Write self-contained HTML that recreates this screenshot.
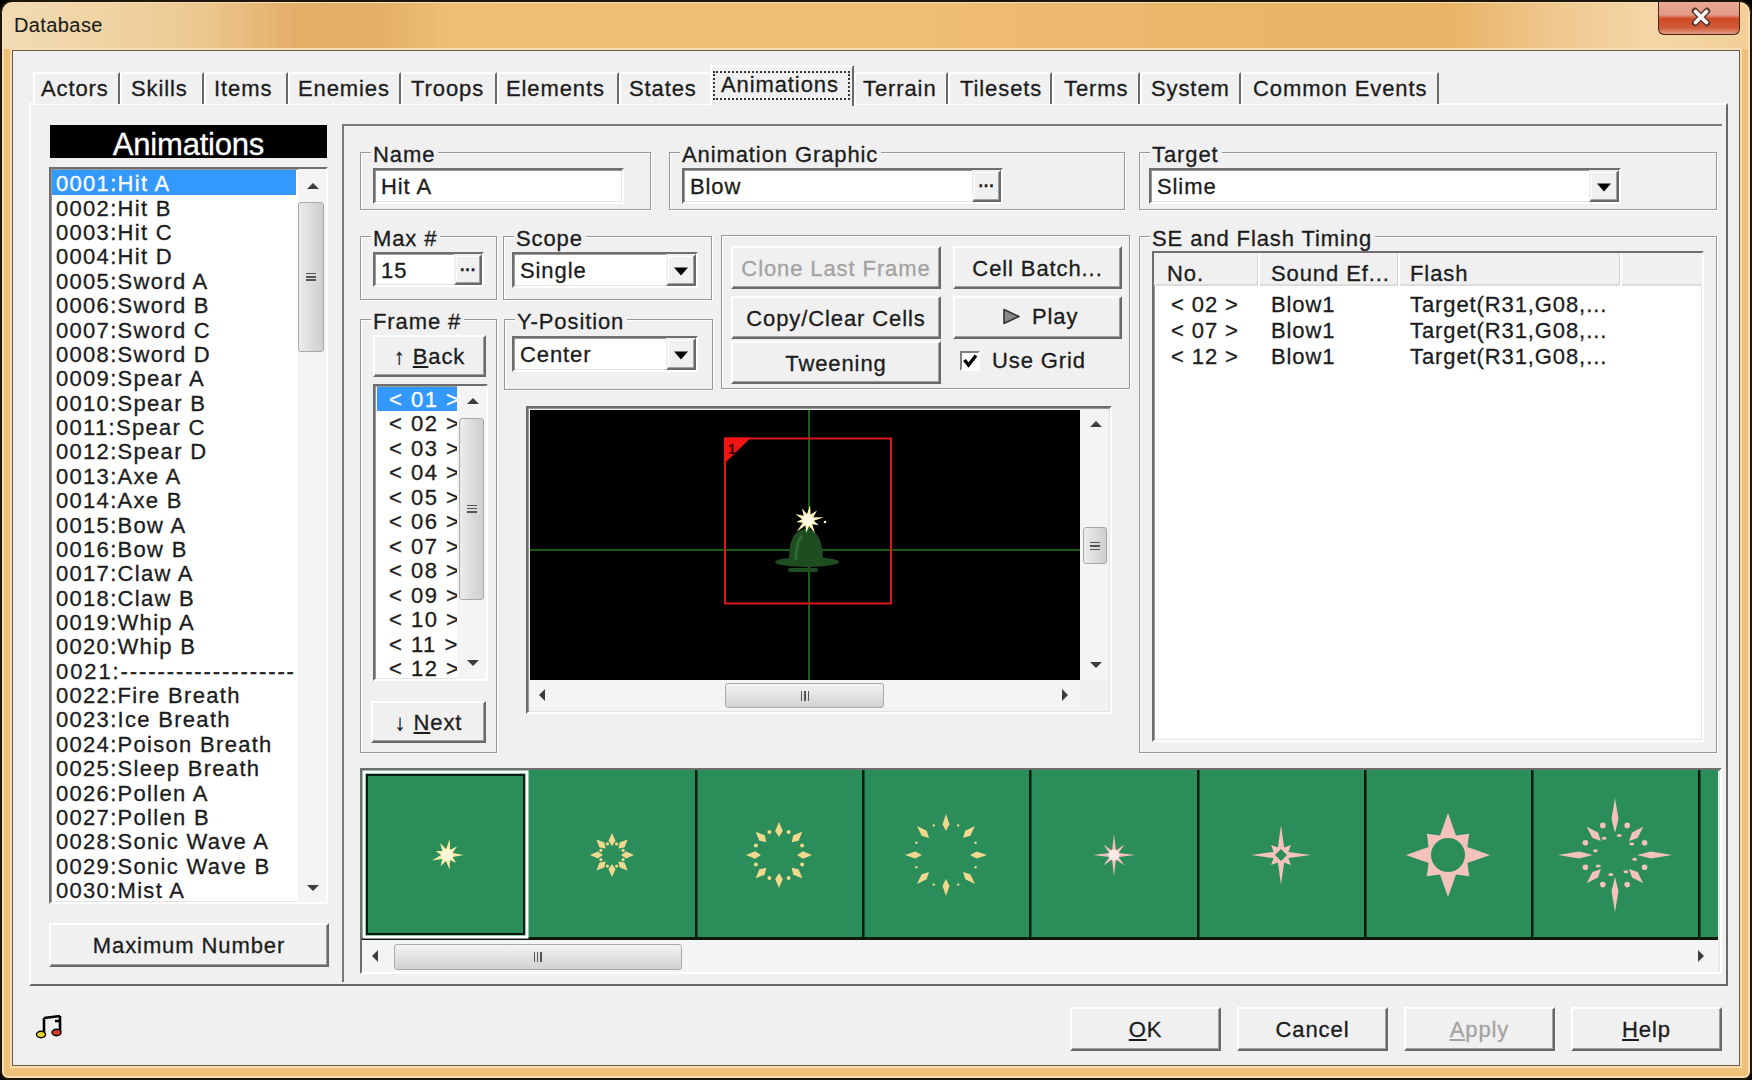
<!DOCTYPE html>
<html><head><meta charset="utf-8">
<style>
*{margin:0;padding:0;box-sizing:border-box}
html,body{width:1752px;height:1080px;overflow:hidden;background:#000}
body{position:relative;font-family:"Liberation Sans",sans-serif;font-size:22px;color:#1c1c1c;letter-spacing:0.9px;-webkit-text-stroke-width:0.3px}
.a{position:absolute}
.t{position:absolute;white-space:nowrap;line-height:1}
#frame{left:0;top:0;width:1752px;height:1080px;border-radius:12px 12px 8px 8px;background:#eec07a;border:2px solid #1e160c;box-shadow:inset 0 0 0 2px #f7ddb4}
#title{left:4px;top:3px;width:1744px;height:46px;border-radius:10px 10px 0 0;background:linear-gradient(90deg,#f1dab3 0px,#f0d4a4 96px,#ecc890 196px,#e3ad66 296px,#e4b068 376px,#efbf74 446px,#f0be73 896px,#e9b66a 1196px,#e9b467 1446px,#f0c890 1556px,#f4d6a6 1646px,#f2cf98 1744px)}
#client{left:12px;top:50px;width:1728px;height:1016px;background:#f0f0f0;border:1px solid #6b5a40;box-shadow:0 0 0 2px #f7ddb4}
.btn{position:absolute;background:#f0f0f0;border-top:2px solid #fff;border-left:2px solid #fff;border-right:2px solid #696969;border-bottom:2px solid #696969;box-shadow:inset -1px -1px 0 #a0a0a0;display:flex;align-items:center;justify-content:center;white-space:nowrap;line-height:1;padding-top:2px}
.grp{position:absolute;border:1px solid #989898;box-shadow:1px 1px 0 #fff, inset 1px 1px 0 #fff}
.lbl{position:absolute;background:#f0f0f0;padding:0 3px 0 2px;line-height:1;white-space:nowrap;top:-9.5px;left:10px}
.sunk{position:absolute;background:#fff;border-top:2px solid #6e6e6e;border-left:2px solid #6e6e6e;border-right:2px solid #fff;border-bottom:2px solid #fff;box-shadow:inset 1px 1px 0 #9a9a9a, inset -1px -1px 0 #e3e3e3}
.tab{position:absolute;top:72px;height:32px;border-top:2px solid #fff;border-left:2px solid #fff;border-right:2px solid #696969;background:#f0f0f0}
.row{position:absolute;left:1px;width:244px;height:24.4px;line-height:24.4px;white-space:nowrap;letter-spacing:1.3px;padding-left:4px}
.row.sel,.frow.sel{background:#3399ff;color:#fff}
.frow{position:absolute;left:2px;width:82px;height:24.4px;line-height:24.4px;white-space:nowrap;letter-spacing:1.5px;padding-left:12px}
.sb{position:absolute;background:#f4f4f4}
.thumb{position:absolute;border:1px solid #a9a9a9;border-radius:3px;background:linear-gradient(90deg,#ececec,#dcdcdc 50%,#cfcfcf)}
.thumbh{position:absolute;border:1px solid #a9a9a9;border-radius:3px;background:linear-gradient(180deg,#f3f3f3,#e2e2e2 50%,#d2d2d2)}
.arr{position:absolute;width:0;height:0}
.arr.up{border-left:6px solid transparent;border-right:6px solid transparent;border-bottom:6px solid #3c3c3c}
.arr.dn{border-left:6px solid transparent;border-right:6px solid transparent;border-top:6px solid #3c3c3c}
.arr.lf{border-top:6px solid transparent;border-bottom:6px solid transparent;border-right:6px solid #3c3c3c}
.arr.rt{border-top:6px solid transparent;border-bottom:6px solid transparent;border-left:6px solid #3c3c3c}
.grip{position:absolute;left:50%;top:50%;transform:translate(-50%,-50%)}
.grip.v{width:10px;height:9px;background:repeating-linear-gradient(180deg,#555 0 1.5px,transparent 1.5px 3.5px)}
.grip.h{width:9px;height:10px;background:repeating-linear-gradient(90deg,#555 0 1.5px,transparent 1.5px 3.5px)}
.hsep{position:absolute;top:0;width:3px;height:33px;border-left:1px solid #d5d5d5;border-right:2px solid #fff}
.dd{position:absolute;right:0;top:0;width:30px;height:100%;background:#f0f0f0;border-top:2px solid #f0f0f0;border-left:2px solid #f0f0f0;border-right:2px solid #696969;border-bottom:2px solid #696969;box-shadow:inset -1px -1px 0 #a0a0a0, inset 1px 1px 0 #fff}
.tri{position:absolute;left:50%;top:50%;width:0;height:0;border-left:7px solid transparent;border-right:7px solid transparent;border-top:8px solid #000;transform:translate(-50%,-30%)}
.dots{position:absolute;left:50%;top:50%;transform:translate(-50%,-50%);font-weight:bold;font-size:16px;letter-spacing:0;line-height:1}
</style></head><body>
<div id="frame" class="a"></div>
<div id="title" class="a"></div>
<div class="t" style="left:14px;top:15px;font-size:20px;color:#1b1b1b;letter-spacing:0.4px;-webkit-text-stroke-width:0.1px">Database</div>
<!-- close button -->
<div class="a" style="left:1658px;top:2px;width:82px;height:33px;border:1px solid #4a2418;border-top:none;border-radius:0 0 6px 6px;background:linear-gradient(180deg,#e8a894 0%,#e29a84 40%,#cf4a26 52%,#d05a38 80%,#e39a84 100%)"></div>
<svg class="a" style="left:1686px;top:5px" width="30" height="24"><path d="M9,6 L21,18 M21,6 L9,18" stroke="#5a3a30" stroke-width="6.5" stroke-linecap="round"/><path d="M9.5,6.5 L20.5,17.5 M20.5,6.5 L9.5,17.5" stroke="#fafafa" stroke-width="3.6" stroke-linecap="round"/></svg>
<div id="client" class="a"></div>

<!-- tab page border -->
<div class="a" style="left:29px;top:103px;width:1699px;height:883px;border-top:2px solid #fff;border-left:2px solid #fff;border-right:2px solid #696969;border-bottom:2px solid #696969"></div>
<div class="tab" style="left:33px;width:87px"><span class="t" style="left:6px;top:3.5px">Actors</span></div>
<div class="tab" style="left:120px;width:84px"><span class="t" style="left:9px;top:3.5px">Skills</span></div>
<div class="tab" style="left:204px;width:84px"><span class="t" style="left:8px;top:3.5px">Items</span></div>
<div class="tab" style="left:288px;width:113px"><span class="t" style="left:8px;top:3.5px">Enemies</span></div>
<div class="tab" style="left:401px;width:96px"><span class="t" style="left:8px;top:3.5px">Troops</span></div>
<div class="tab" style="left:497px;width:122px"><span class="t" style="left:7px;top:3.5px">Elements</span></div>
<div class="tab" style="left:619px;width:91px;border-right:none"><span class="t" style="left:8px;top:3.5px">States</span></div>
<div class="tab" style="left:854px;width:94px"><span class="t" style="left:7px;top:3.5px">Terrain</span></div>
<div class="tab" style="left:948px;width:104px"><span class="t" style="left:10px;top:3.5px">Tilesets</span></div>
<div class="tab" style="left:1052px;width:88px"><span class="t" style="left:10px;top:3.5px">Terms</span></div>
<div class="tab" style="left:1140px;width:101px"><span class="t" style="left:9px;top:3.5px">System</span></div>
<div class="tab" style="left:1241px;width:198px"><span class="t" style="left:10px;top:3.5px">Common Events</span></div>

<!-- selected tab -->
<div class="a" style="left:710px;top:65px;width:144px;height:41px;border-top:2px solid #fff;border-left:2px solid #fff;border-right:2px solid #696969;background:#f0f0f0"></div>
<div class="a" style="left:713px;top:71px;width:137px;height:29px;border:2px dotted #333"></div>
<div class="t" style="left:721px;top:74px">Animations</div>

<!-- left panel -->
<div class="a" style="left:50px;top:125px;width:277px;height:33px;background:#000"></div>
<div class="t" style="left:50px;top:128.5px;width:277px;text-align:center;color:#fff;font-size:31px;letter-spacing:-0.2px">Animations</div>
<div class="sunk" style="left:49px;top:167px;width:279px;height:737px;overflow:hidden">
<div class="row sel" style="top:1.3px"><span style="position:relative;top:2px">0001:Hit A</span></div>
<div class="row" style="top:27.7px">0002:Hit B</div>
<div class="row" style="top:52.0px">0003:Hit C</div>
<div class="row" style="top:76.4px">0004:Hit D</div>
<div class="row" style="top:100.8px">0005:Sword A</div>
<div class="row" style="top:125.2px">0006:Sword B</div>
<div class="row" style="top:149.5px">0007:Sword C</div>
<div class="row" style="top:173.9px">0008:Sword D</div>
<div class="row" style="top:198.3px">0009:Spear A</div>
<div class="row" style="top:222.6px">0010:Spear B</div>
<div class="row" style="top:247.0px">0011:Spear C</div>
<div class="row" style="top:271.4px">0012:Spear D</div>
<div class="row" style="top:295.7px">0013:Axe A</div>
<div class="row" style="top:320.1px">0014:Axe B</div>
<div class="row" style="top:344.5px">0015:Bow A</div>
<div class="row" style="top:368.9px">0016:Bow B</div>
<div class="row" style="top:393.2px">0017:Claw A</div>
<div class="row" style="top:417.6px">0018:Claw B</div>
<div class="row" style="top:442.0px">0019:Whip A</div>
<div class="row" style="top:466.3px">0020:Whip B</div>
<div class="row" style="top:490.7px;letter-spacing:1.9px">0021:-------------------</div>
<div class="row" style="top:515.1px">0022:Fire Breath</div>
<div class="row" style="top:539.4px">0023:Ice Breath</div>
<div class="row" style="top:563.8px">0024:Poison Breath</div>
<div class="row" style="top:588.2px">0025:Sleep Breath</div>
<div class="row" style="top:612.5px">0026:Pollen A</div>
<div class="row" style="top:636.9px">0027:Pollen B</div>
<div class="row" style="top:661.3px">0028:Sonic Wave A</div>
<div class="row" style="top:685.7px">0029:Sonic Wave B</div>
<div class="row" style="top:710.0px">0030:Mist A</div>
<div class="sb" style="left:247px;top:0px;width:28px;height:733px"></div>
<div class="arr up" style="left:256px;top:14px"></div>
<div class="thumb" style="left:247px;top:33px;width:26px;height:150px"><div class="grip v"></div></div>
<div class="arr dn" style="left:256px;top:716px"></div>
</div>
<div class="btn" style="left:49px;top:923px;width:280px;height:44px">Maximum Number</div>

<!-- right panel sunken edge -->
<div class="a" style="left:342px;top:124px;width:1380px;height:858px;border-top:2px solid #7a7a7a;border-left:2px solid #7a7a7a"></div>

<!-- Name -->
<div class="grp" style="left:360px;top:152px;width:291px;height:58px"><span class="lbl">Name</span></div>
<div class="sunk" style="left:373px;top:168px;width:251px;height:36px"><span class="t" style="left:6px;top:6px">Hit A</span></div>
<!-- Animation Graphic -->
<div class="grp" style="left:669px;top:152px;width:456px;height:58px"><span class="lbl">Animation Graphic</span></div>
<div class="sunk" style="left:682px;top:168px;width:321px;height:36px"><span class="t" style="left:6px;top:6px">Blow</span><div class="dd" style="width:29px"><span class="dots">···</span></div></div>
<!-- Target -->
<div class="grp" style="left:1139px;top:152px;width:578px;height:58px"><span class="lbl">Target</span></div>
<div class="sunk" style="left:1149px;top:168px;width:472px;height:36px"><span class="t" style="left:6px;top:6px">Slime</span><div class="dd"><span class="tri"></span></div></div>

<!-- Max # -->
<div class="grp" style="left:360px;top:236px;width:137px;height:64px"><span class="lbl">Max #</span></div>
<div class="sunk" style="left:373px;top:252px;width:111px;height:35px"><span class="t" style="left:6px;top:6px">15</span><div class="dd" style="width:28px"><span class="dots">···</span></div></div>
<!-- Scope -->
<div class="grp" style="left:503px;top:236px;width:209px;height:64px"><span class="lbl">Scope</span></div>
<div class="sunk" style="left:512px;top:252px;width:186px;height:36px"><span class="t" style="left:6px;top:6px">Single</span><div class="dd"><span class="tri"></span></div></div>
<!-- Frame # -->
<div class="grp" style="left:360px;top:319px;width:137px;height:434px"><span class="lbl">Frame #</span></div>
<div class="btn" style="left:373px;top:335px;width:113px;height:42px">↑&nbsp;<u>B</u>ack</div>
<div class="sunk" style="left:373px;top:384px;width:115px;height:297px;overflow:hidden">
<div class="frow sel" style="top:1.0px"><span style="position:relative;top:1px">&lt; 01 &gt;</span></div>
<div class="frow" style="top:26.4px">&lt; 02 &gt;</div>
<div class="frow" style="top:50.9px">&lt; 03 &gt;</div>
<div class="frow" style="top:75.4px">&lt; 04 &gt;</div>
<div class="frow" style="top:99.8px">&lt; 05 &gt;</div>
<div class="frow" style="top:124.2px">&lt; 06 &gt;</div>
<div class="frow" style="top:148.7px">&lt; 07 &gt;</div>
<div class="frow" style="top:173.1px">&lt; 08 &gt;</div>
<div class="frow" style="top:197.6px">&lt; 09 &gt;</div>
<div class="frow" style="top:222.0px">&lt; 10 &gt;</div>
<div class="frow" style="top:246.5px">&lt; 11 &gt;</div>
<div class="frow" style="top:271.0px">&lt; 12 &gt;</div>
<div class="sb" style="left:82px;top:0px;width:29px;height:293px"></div>
<div class="arr up" style="left:92px;top:12px"></div>
<div class="thumb" style="left:84px;top:32px;width:25px;height:182px"><div class="grip v"></div></div>
<div class="arr dn" style="left:92px;top:274px"></div>
</div>
<div class="btn" style="left:371px;top:701px;width:115px;height:42px">↓&nbsp;<u>N</u>ext</div>
<!-- Y-Position -->
<div class="grp" style="left:504px;top:319px;width:209px;height:71px"><span class="lbl">Y-Position</span></div>
<div class="sunk" style="left:512px;top:336px;width:186px;height:36px"><span class="t" style="left:6px;top:6px">Center</span><div class="dd"><span class="tri"></span></div></div>

<!-- buttons group -->
<div class="grp" style="left:721px;top:235px;width:409px;height:154px"></div>
<div class="btn" style="left:731px;top:246px;width:210px;height:43px;color:#a3a3a3">Clone Last Frame</div>
<div class="btn" style="left:953px;top:246px;width:169px;height:43px">Cell Batch...</div>
<div class="btn" style="left:731px;top:296px;width:210px;height:43px">Copy/Clear Cells</div>
<div class="btn" style="left:953px;top:296px;width:169px;height:43px"></div>
<svg class="a" style="left:1002px;top:308px" width="20" height="18"><polygon points="2,1.5 17,8.5 2,15.5" fill="#888" stroke="#333" stroke-width="1.6" stroke-linejoin="round"/></svg>
<div class="t" style="left:1032px;top:306px">Play</div>
<div class="btn" style="left:731px;top:341px;width:210px;height:43px">Tweening</div>
<div class="a" style="left:960px;top:351px;width:20px;height:20px;background:#fff;border-top:2px solid #808080;border-left:2px solid #808080;border-right:2px solid #fff;border-bottom:2px solid #fff"></div>
<svg class="a" style="left:962px;top:353px" width="16" height="16"><path d="M2.5,7 L6.5,12 L14,2.5" stroke="#000" stroke-width="3.4" fill="none"/></svg>
<div class="t" style="left:992px;top:350px">Use Grid</div>

<!-- SE and Flash Timing -->
<div class="grp" style="left:1139px;top:236px;width:578px;height:517px"><span class="lbl">SE and Flash Timing</span></div>
<div class="sunk" style="left:1152px;top:251px;width:552px;height:491px;overflow:hidden">
<div class="a" style="left:0;top:0;width:549px;height:33px;background:#f0f0f0;border-bottom:2px solid #dcdcdc"></div>
<div class="hsep" style="left:103px"></div><div class="hsep" style="left:243px"></div><div class="hsep" style="left:465px"></div>
<span class="t" style="left:13px;top:10px">No.</span>
<span class="t" style="left:117px;top:10px">Sound Ef...</span>
<span class="t" style="left:256px;top:10px">Flash</span>
<span class="t" style="left:17px;top:41px">&lt; 02 &gt;</span><span class="t" style="left:117px;top:41px">Blow1</span><span class="t" style="left:256px;top:41px">Target(R31,G08,...</span>
<span class="t" style="left:17px;top:67px">&lt; 07 &gt;</span><span class="t" style="left:117px;top:67px">Blow1</span><span class="t" style="left:256px;top:67px">Target(R31,G08,...</span>
<span class="t" style="left:17px;top:93px">&lt; 12 &gt;</span><span class="t" style="left:117px;top:93px">Blow1</span><span class="t" style="left:256px;top:93px">Target(R31,G08,...</span>
</div>

<!-- canvas -->
<div class="sunk" style="left:526px;top:406px;width:586px;height:308px;background:#f0f0f0"></div>
<div class="a" style="left:530px;top:410px;width:550px;height:270px;background:#000;overflow:hidden">
<svg width="550" height="270" style="position:absolute;left:0;top:0">
<line x1="279" y1="0" x2="279" y2="270" stroke="#1f7a1f" stroke-width="1.6"/>
<line x1="0" y1="140" x2="550" y2="140" stroke="#1f7a1f" stroke-width="1.6"/>
<rect x="195" y="28.5" width="166" height="165" fill="none" stroke="#d8181c" stroke-width="2"/>
<polygon points="194,27.5 221,27.5 194,54" fill="#f01414"/>
<text x="198" y="44" font-size="14" font-weight="bold" font-family="Liberation Sans" fill="#300" style="letter-spacing:0;-webkit-text-stroke-width:0">1</text>
<g fill="#1f4d22">
<path d="M259,152 C259,136 261,121 275,119 C289,119 293,134 293,152 Z"/>
<ellipse cx="277" cy="152" rx="32" ry="5"/>
<rect x="258" y="158" width="30" height="4" rx="2"/>
</g>
<path d="M266,150 C266,138 268,130 272,126" stroke="#2d6a32" stroke-width="3" fill="none"/>
<polygon points="280.1,95.1 280.6,104.6 287.0,100.6 283.3,107.2 293.8,107.2 283.9,110.8 288.8,115.3 282.3,114.2 285.0,123.2 279.0,115.9 276.2,122.9 275.4,115.4 266.9,121.5 272.7,112.8 266.2,112.1 272.1,109.2 265.4,103.9 273.7,105.8 271.9,98.5 277.0,104.1" fill="#fff4c4"/>
<circle cx="278" cy="110" r="5" fill="#fffbe6"/>
<circle cx="295" cy="112" r="1.3" fill="#fff4c4"/>
</svg>
</div>
<div class="sb" style="left:1080px;top:410px;width:28px;height:270px"></div>
<div class="arr up" style="left:1090px;top:421px"></div>
<div class="thumb" style="left:1083px;top:527px;width:24px;height:37px"><div class="grip v"></div></div>
<div class="arr dn" style="left:1090px;top:662px"></div>
<div class="sb" style="left:530px;top:680px;width:550px;height:30px"></div>
<div class="arr lf" style="left:539px;top:689px"></div>
<div class="thumbh" style="left:725px;top:683px;width:159px;height:25px"><div class="grip h"></div></div>
<div class="arr rt" style="left:1062px;top:689px"></div>

<!-- cel strip -->
<div class="sunk" style="left:360px;top:768px;width:1362px;height:206px;background:#f0f0f0"></div>
<div class="a" style="left:362px;top:770px;width:1356px;height:170px;background:#2a8d5a;overflow:hidden">
<svg width="1356" height="170" style="position:absolute;left:0;top:0">
<g transform="translate(-362,-770)">
<rect x="362" y="937" width="1356" height="3" fill="#0a1a10"/>
<rect x="364" y="772" width="163" height="165" fill="none" stroke="#fff" stroke-width="3"/>
<rect x="367" y="775" width="157" height="159" fill="none" stroke="#0a1a10" stroke-width="2"/>
<rect x="695" y="770" width="2.5" height="170" fill="#0a1a10"/>
<rect x="862" y="770" width="2.5" height="170" fill="#0a1a10"/>
<rect x="1029" y="770" width="2.5" height="170" fill="#0a1a10"/>
<rect x="1197" y="770" width="2.5" height="170" fill="#0a1a10"/>
<rect x="1364" y="770" width="2.5" height="170" fill="#0a1a10"/>
<rect x="1531" y="770" width="2.5" height="170" fill="#0a1a10"/>
<rect x="1698" y="770" width="2.5" height="170" fill="#0a1a10"/>
<polygon points="449.8,839.2 450.0,849.8 457.0,846.6 452.6,852.9 464.0,855.0 452.6,857.1 456.2,862.7 450.0,860.2 449.6,869.8 446.0,860.9 440.5,866.3 442.4,858.9 432.0,860.5 441.0,855.0 435.7,850.9 442.4,851.1 440.0,842.9 446.0,849.1" fill="#f8eaa8"/>
<circle cx="447" cy="855" r="6" fill="#fff8d8"/>
<polygon points="612.0,846.0 615.5,840.8 612.0,833.0 608.5,840.8" fill="#f0d88c"/>
<polygon points="618.4,848.6 624.5,847.4 627.6,839.4 619.6,842.5" fill="#f0d88c"/>
<polygon points="621.0,855.0 626.2,858.5 634.0,855.0 626.2,851.5" fill="#f0d88c"/>
<polygon points="618.4,861.4 619.6,867.5 627.6,870.6 624.5,862.6" fill="#f0d88c"/>
<polygon points="612.0,864.0 608.5,869.2 612.0,877.0 615.5,869.2" fill="#f0d88c"/>
<polygon points="605.6,861.4 599.5,862.6 596.4,870.6 604.4,867.5" fill="#f0d88c"/>
<polygon points="603.0,855.0 597.8,851.5 590.0,855.0 597.8,858.5" fill="#f0d88c"/>
<polygon points="605.6,848.6 604.4,842.5 596.4,839.4 599.5,847.4" fill="#f0d88c"/>
<circle cx="616.6" cy="843.9" r="1.6" fill="#f0d88c"/>
<circle cx="623.1" cy="850.4" r="1.6" fill="#f0d88c"/>
<circle cx="623.1" cy="859.6" r="1.6" fill="#f0d88c"/>
<circle cx="616.6" cy="866.1" r="1.6" fill="#f0d88c"/>
<circle cx="607.4" cy="866.1" r="1.6" fill="#f0d88c"/>
<circle cx="600.9" cy="859.6" r="1.6" fill="#f0d88c"/>
<circle cx="600.9" cy="850.4" r="1.6" fill="#f0d88c"/>
<circle cx="607.4" cy="843.9" r="1.6" fill="#f0d88c"/>
<polygon points="779.0,837.0 782.8,831.0 779.0,822.0 775.2,831.0" fill="#f0d88c"/>
<polygon points="791.7,842.3 798.7,840.7 802.3,831.7 793.3,835.3" fill="#f0d88c"/>
<polygon points="797.0,855.0 803.0,858.8 812.0,855.0 803.0,851.2" fill="#f0d88c"/>
<polygon points="791.7,867.7 793.3,874.7 802.3,878.3 798.7,869.3" fill="#f0d88c"/>
<polygon points="779.0,873.0 775.2,879.0 779.0,888.0 782.8,879.0" fill="#f0d88c"/>
<polygon points="766.3,867.7 759.3,869.3 755.7,878.3 764.7,874.7" fill="#f0d88c"/>
<polygon points="761.0,855.0 755.0,851.2 746.0,855.0 755.0,858.8" fill="#f0d88c"/>
<polygon points="766.3,842.3 764.7,835.3 755.7,831.7 759.3,840.7" fill="#f0d88c"/>
<circle cx="788.6" cy="831.9" r="2" fill="#f0d88c"/>
<circle cx="802.1" cy="845.4" r="2" fill="#f0d88c"/>
<circle cx="802.1" cy="864.6" r="2" fill="#f0d88c"/>
<circle cx="788.6" cy="878.1" r="2" fill="#f0d88c"/>
<circle cx="769.4" cy="878.1" r="2" fill="#f0d88c"/>
<circle cx="755.9" cy="864.6" r="2" fill="#f0d88c"/>
<circle cx="755.9" cy="845.4" r="2" fill="#f0d88c"/>
<circle cx="769.4" cy="831.9" r="2" fill="#f0d88c"/>
<polygon points="946.0,831.0 949.5,824.2 946.0,814.0 942.5,824.2" fill="#f0d88c"/>
<polygon points="963.0,838.0 970.3,835.7 975.0,826.0 965.3,830.7" fill="#f0d88c"/>
<polygon points="970.0,855.0 976.8,858.5 987.0,855.0 976.8,851.5" fill="#f0d88c"/>
<polygon points="963.0,872.0 965.3,879.3 975.0,884.0 970.3,874.3" fill="#f0d88c"/>
<polygon points="946.0,879.0 942.5,885.8 946.0,896.0 949.5,885.8" fill="#f0d88c"/>
<polygon points="929.0,872.0 921.7,874.3 917.0,884.0 926.7,879.3" fill="#f0d88c"/>
<polygon points="922.0,855.0 915.2,851.5 905.0,855.0 915.2,858.5" fill="#f0d88c"/>
<polygon points="929.0,838.0 926.7,830.7 917.0,826.0 921.7,835.7" fill="#f0d88c"/>
<circle cx="958.2" cy="825.4" r="1.2" fill="#f0d88c"/>
<circle cx="975.6" cy="842.8" r="1.2" fill="#f0d88c"/>
<circle cx="975.6" cy="867.2" r="1.2" fill="#f0d88c"/>
<circle cx="958.2" cy="884.6" r="1.2" fill="#f0d88c"/>
<circle cx="933.8" cy="884.6" r="1.2" fill="#f0d88c"/>
<circle cx="916.4" cy="867.2" r="1.2" fill="#f0d88c"/>
<circle cx="916.4" cy="842.8" r="1.2" fill="#f0d88c"/>
<circle cx="933.8" cy="825.4" r="1.2" fill="#f0d88c"/>
<polygon points="1114.0,834.0 1115.9,850.4 1124.6,844.4 1118.6,853.1 1135.0,855.0 1118.6,856.9 1124.6,865.6 1115.9,859.6 1114.0,876.0 1112.1,859.6 1103.4,865.6 1109.4,856.9 1093.0,855.0 1109.4,853.1 1103.4,844.4 1112.1,850.4" fill="#f3c2ba"/>
<circle cx="1114" cy="855" r="5.5" fill="#fde8e6"/>
<polygon points="1281.0,825.0 1284.1,847.6 1290.9,845.1 1288.4,851.9 1311.0,855.0 1288.4,858.1 1290.9,864.9 1284.1,862.4 1281.0,885.0 1277.9,862.4 1271.1,864.9 1273.6,858.1 1251.0,855.0 1273.6,851.9 1271.1,845.1 1277.9,847.6" fill="#f3c2ba"/>
<polygon points="1281,849 1287,855 1281,861 1275,855" fill="#2a8d5a"/>
<polygon points="1448.0,813.0 1456.0,835.6 1469.2,833.8 1467.4,847.0 1490.0,855.0 1467.4,863.0 1469.2,876.2 1456.0,874.4 1448.0,897.0 1440.0,874.4 1426.8,876.2 1428.6,863.0 1406.0,855.0 1428.6,847.0 1426.8,833.8 1440.0,835.6" fill="#f3c2ba"/>
<circle cx="1448" cy="855" r="17" fill="#2a8d5a"/>
<polygon points="1615.0,833.0 1618.5,819.0 1615.0,798.0 1611.5,819.0" fill="#f3c2ba"/>
<polygon points="1637.0,855.0 1651.0,858.5 1672.0,855.0 1651.0,851.5" fill="#f3c2ba"/>
<polygon points="1615.0,877.0 1611.5,891.0 1615.0,912.0 1618.5,891.0" fill="#f3c2ba"/>
<polygon points="1593.0,855.0 1579.0,851.5 1558.0,855.0 1579.0,858.5" fill="#f3c2ba"/>
<polygon points="1629.1,840.9 1637.6,838.0 1643.3,826.7 1632.0,832.4" fill="#f3c2ba"/>
<polygon points="1629.1,869.1 1632.0,877.6 1643.3,883.3 1637.6,872.0" fill="#f3c2ba"/>
<polygon points="1600.9,869.1 1592.4,872.0 1586.7,883.3 1598.0,877.6" fill="#f3c2ba"/>
<polygon points="1600.9,840.9 1598.0,832.4 1586.7,826.7 1592.4,838.0" fill="#f3c2ba"/>
<circle cx="1627.2" cy="825.4" r="2.8" fill="#f3c2ba"/>
<circle cx="1644.6" cy="842.8" r="2.8" fill="#f3c2ba"/>
<circle cx="1644.6" cy="867.2" r="2.8" fill="#f3c2ba"/>
<circle cx="1627.2" cy="884.6" r="2.8" fill="#f3c2ba"/>
<circle cx="1602.8" cy="884.6" r="2.8" fill="#f3c2ba"/>
<circle cx="1585.4" cy="867.2" r="2.8" fill="#f3c2ba"/>
<circle cx="1585.4" cy="842.8" r="2.8" fill="#f3c2ba"/>
<circle cx="1602.8" cy="825.4" r="2.8" fill="#f3c2ba"/>
<ellipse cx="1619.2" cy="835.4" rx="2.5" ry="1.5" fill="#f3c2ba"/>
<ellipse cx="1631.8" cy="844.1" rx="2.5" ry="1.5" fill="#f3c2ba"/>
<ellipse cx="1634.6" cy="859.2" rx="2.5" ry="1.5" fill="#f3c2ba"/>
<ellipse cx="1625.9" cy="871.8" rx="2.5" ry="1.5" fill="#f3c2ba"/>
<ellipse cx="1610.8" cy="874.6" rx="2.5" ry="1.5" fill="#f3c2ba"/>
<ellipse cx="1598.2" cy="865.9" rx="2.5" ry="1.5" fill="#f3c2ba"/>
<ellipse cx="1595.4" cy="850.8" rx="2.5" ry="1.5" fill="#f3c2ba"/>
<ellipse cx="1604.1" cy="838.2" rx="2.5" ry="1.5" fill="#f3c2ba"/>
</g></svg></div>
<div class="sb" style="left:362px;top:940px;width:1356px;height:32px"></div>
<div class="arr lf" style="left:372px;top:950px"></div>
<div class="thumbh" style="left:394px;top:944px;width:288px;height:26px"><div class="grip h"></div></div>
<div class="arr rt" style="left:1698px;top:950px"></div>

<!-- bottom -->
<svg class="a" style="left:34px;top:1012px" width="32" height="30" viewBox="0 0 32 30">
<path d="M10,6 L10,22 M26,4 L26,20 M10,6 L26,4" stroke="#000" stroke-width="2.6" fill="none"/>
<path d="M21,9 L26,9" stroke="#000" stroke-width="2.6"/>
<ellipse cx="7" cy="22.5" rx="4.5" ry="3.2" fill="#e8d830" stroke="#000" stroke-width="1.4"/>
<ellipse cx="22.5" cy="20.5" rx="4.5" ry="3.2" fill="#d83a2a" stroke="#000" stroke-width="1.4"/>
</svg>
<div class="btn" style="left:1070px;top:1007px;width:151px;height:44px"><u>O</u>K</div>
<div class="btn" style="left:1237px;top:1007px;width:151px;height:44px">Cancel</div>
<div class="btn" style="left:1404px;top:1007px;width:151px;height:44px;color:#a3a3a3"><u>A</u>pply</div>
<div class="btn" style="left:1571px;top:1007px;width:151px;height:44px"><u>H</u>elp</div>
</body></html>
